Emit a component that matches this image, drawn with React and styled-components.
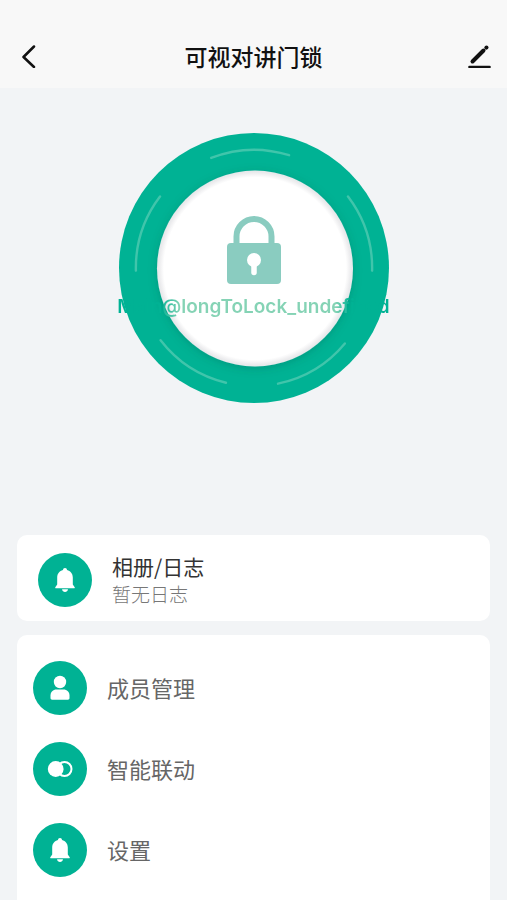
import React from 'react'
import styled, { createGlobalStyle } from 'styled-components'

const Colors = {
    GREEN: '#00b294',
    LOCK: '#8accc0',
    HINT: '#85d3b5',
    PAGE: '#f2f4f6',
    BAR: '#f8f8f8',
}

const MENU = [
    { id: 'members', label: '成员管理', icon: <UserIcon /> },
    { id: 'smart', label: '智能联动', icon: <LinkageIcon /> },
    { id: 'settings', label: '设置', icon: <BellIcon /> },
]

export default function App() {
    return (
        <>
            <GlobalStyle />
            <Page>
                <TopBar>
                    <IconButton type="button" aria-label="返回">
                        <BackIcon />
                    </IconButton>
                    <Title>可视对讲门锁</Title>
                    <IconButton type="button" aria-label="编辑">
                        <EditIcon />
                    </IconButton>
                </TopBar>

                <Stage>
                    <LockButton type="button">
                        <Dial />
                        <LockHint>Main@longToLock_undefined</LockHint>
                    </LockButton>
                </Stage>

                <Cards>
                    <LogCard type="button">
                        <Badge><BellIcon /></Badge>
                        <LogText>
                            <LogTitle>相册/日志</LogTitle>
                            <LogStatus>暂无日志</LogStatus>
                        </LogText>
                    </LogCard>

                    <Menu>
                        {MENU.map(item => (
                            <li key={item.id}>
                                <MenuItem type="button">
                                    <Badge>{item.icon}</Badge>
                                    <MenuLabel>{item.label}</MenuLabel>
                                </MenuItem>
                            </li>
                        ))}
                    </Menu>
                </Cards>
            </Page>
        </>
    )
}

function Dial() {
    return (
        <svg width="270" height="270" viewBox="-135 -135 270 270" aria-hidden="true">
            <defs>
                <filter id="discShadow" x="-20%" y="-20%" width="140%" height="140%">
                    <feDropShadow dx="0" dy="2" stdDeviation="4" floodColor="#004d40" floodOpacity="0.25" />
                </filter>
                <radialGradient id="disc">
                    <stop offset="0.93" stopColor="#fff" />
                    <stop offset="0.98" stopColor="#ebebed" />
                    <stop offset="1" stopColor="#e4e8ea" />
                </radialGradient>
            </defs>
            <circle r="135" fill={Colors.GREEN} />
            <g fill="none" stroke="#40c5ab" strokeWidth="2.4" strokeLinecap="round">
                {[-2, 72, 149, 213, 288].map(angle => (
                    <path key={angle} d="M-39 -111.500A118 118 0 0 1 39 -111.500" transform={`rotate(${angle})`} />
                ))}
            </g>
            <circle r="98" cx="1" cy="0.500" fill="url(#disc)" filter="url(#discShadow)" />
            <path d="M-17.500 -23V-31.500A17.500 17.500 0 0 1 17.500 -31.500V-23" fill="none" stroke={Colors.LOCK} strokeWidth="6" />
            <rect x="-27" y="-25" width="54" height="41" rx="4" fill={Colors.LOCK} />
            <circle cy="-8" r="7" fill="#fff" />
            <path d="M0 -6V4.500" stroke="#fff" strokeWidth="5.500" strokeLinecap="round" />
        </svg>
    )
}

function BackIcon() {
    return (
        <svg width="24" height="24" viewBox="0 0 24 24" fill="none" stroke="#111" strokeWidth="2.500" strokeLinecap="round" strokeLinejoin="round" aria-hidden="true">
            <path d="M18 2.500L7.500 13L18 23" />
        </svg>
    )
}

function EditIcon() {
    return (
        <svg width="24" height="24" viewBox="0 0 24 24" fill="none" stroke="#111" strokeLinecap="round" aria-hidden="true">
            <path d="M5.500 17.500L16.500 6.500" strokeWidth="4" />
            <path d="M19.300 3.700L19.500 3.500" strokeWidth="4" />
            <path d="M2.500 23H22.500" strokeWidth="2.600" />
        </svg>
    )
}

function BellIcon() {
    return (
        <svg width="26" height="26" viewBox="0 0 26 26" fill="#fff" aria-hidden="true">
            <path d="M13 1C11.800 1 11 1.800 11 3C7.500 4 5.200 6.700 5.200 10.500V17.500L3.300 20.300C3 20.900 3.300 21.300 4 21.300H22C22.700 21.300 23 20.900 22.700 20.300L20.800 17.500V10.500C20.800 6.700 18.500 4 15 3C15 1.800 14.200 1 13 1Z" />
            <path d="M10 22.300H16C15.700 24.200 14.500 25 13 25C11.500 25 10.300 24.200 10 22.300Z" />
        </svg>
    )
}

function UserIcon() {
    return (
        <svg width="26" height="26" viewBox="0 0 26 26" fill="#fff" aria-hidden="true">
            <circle cx="13" cy="7" r="6.200" />
            <path d="M3.500 23V20.500C3.500 17 6 14.500 9.500 14.500H16.500C20 14.500 22.500 17 22.500 20.500V23C22.500 24.200 22 24.700 20.800 24.700H5.200C4 24.700 3.500 24.200 3.500 23Z" />
        </svg>
    )
}

function LinkageIcon() {
    return (
        <svg width="26" height="26" viewBox="0 0 26 26" aria-hidden="true">
            <circle cx="17.500" cy="13" r="7" fill="none" stroke="#fff" strokeWidth="2" />
            <circle cx="8.700" cy="13" r="7.900" fill="#fff" />
        </svg>
    )
}

const GlobalStyle = createGlobalStyle`
  * {
    box-sizing: border-box;
  }

  html {
    background: ${Colors.PAGE};
  }

  body {
    margin: 0;
    font-family: 'Noto Sans CJK SC', sans-serif;
  }

  button {
    border: 0;
    padding: 0;
    background: none;
    font: inherit;
    color: inherit;
    cursor: pointer;
  }

  svg {
    display: block;
  }
`

const Page = styled.main`
  height: 100vh;
  display: flex;
  flex-direction: column;
  overflow: hidden;
  background: ${Colors.PAGE};
`

const TopBar = styled.header`
  flex: none;
  display: flex;
  align-items: center;
  justify-content: space-between;
  padding: 36px 16px 12px;
  background: ${Colors.BAR};
`

const IconButton = styled.button`
  width: 24px;
  height: 24px;
`

const Title = styled.h1`
  margin: 0;
  color: #111;
  font-size: 23px;
  line-height: 40px;
  font-weight: 500;
`

const Stage = styled.section`
  flex: none;
  display: flex;
  justify-content: center;
  padding: 45px 0 132px;
`

const LockButton = styled.button`
  position: relative;
  border-radius: 50%;
`

/* caption runs across the dial and blends into its ring at both ends */
const LockHint = styled.span`
  position: absolute;
  top: 162px;
  left: 50%;
  transform: translateX(-50%);
  white-space: nowrap;
  font-family: Inter, sans-serif;
  font-size: 19px;
  line-height: 24px;
  font-weight: 600;
  color: transparent;
  background: linear-gradient(90deg, ${Colors.GREEN} 42px, ${Colors.HINT} 62px, ${Colors.HINT} 218px, ${Colors.GREEN} 232px);
  background-clip: text;
`

const Cards = styled.div`
  flex: 1;
  display: flex;
  flex-direction: column;
  gap: 14px;
  padding: 0 17px;
`

const LogCard = styled.button`
  display: flex;
  align-items: center;
  gap: 20px;
  padding: 17px 21px 13px;
  border-radius: 10px;
  background: #fff;
  text-align: left;
`

const LogText = styled.span`
  display: flex;
  flex-direction: column;
`

const LogTitle = styled.span`
  color: #333;
  font-size: 21px;
  line-height: 28px;
`

const LogStatus = styled.span`
  color: #777;
  font-size: 19px;
  line-height: 28px;
  font-weight: 300;
`

const Menu = styled.ul`
  flex: 1;
  margin: 0;
  padding: 12px 0;
  list-style: none;
  border-radius: 10px 10px 0 0;
  background: #fff;
`

const MenuItem = styled.button`
  width: 100%;
  height: 81px;
  display: flex;
  align-items: center;
  gap: 20px;
  padding: 0 16px;
  text-align: left;
`

const MenuLabel = styled.span`
  padding-bottom: 2px;
  color: #666;
  font-size: 22px;
  line-height: 30px;
`

const Badge = styled.span`
  flex: none;
  width: 54px;
  height: 54px;
  display: flex;
  align-items: center;
  justify-content: center;
  border-radius: 50%;
  background: ${Colors.GREEN};
`
